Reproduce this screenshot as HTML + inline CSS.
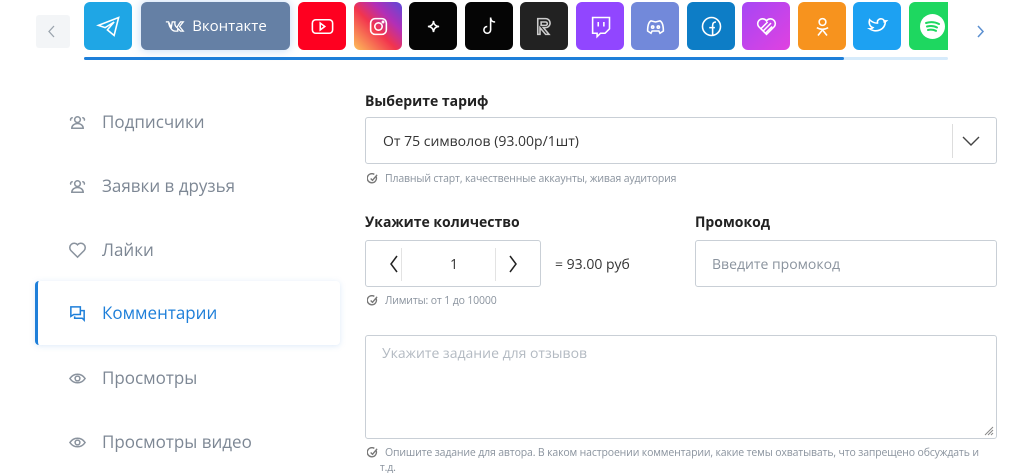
<!DOCTYPE html>
<html><head><meta charset="utf-8"><style>
*{box-sizing:border-box;margin:0;padding:0}
body{width:1024px;height:470px;overflow:hidden;background:#fff;font-family:"Open Sans","Liberation Sans","DejaVu Sans",sans-serif;position:relative;color:#333}
.a{position:absolute}
.tile{position:absolute;top:2px;width:48px;height:48px;border-radius:6px;display:flex;align-items:center;justify-content:center}
.tile svg{width:27px;height:27px;fill:none;stroke:#fff;stroke-width:1.4}
.nav{position:absolute;left:68px;font-size:17px;color:#7d8794;display:flex;align-items:center}
.nav svg{position:absolute;left:0;width:19px;height:19px;fill:none;stroke:#8a939e;stroke-width:1.6}
.nav span{position:absolute;left:34px;white-space:nowrap}
.lbl{position:absolute;font-size:14px;font-weight:bold;color:#222}
.box{position:absolute;border:1px solid #c9cfd6;border-radius:3px}
.hint{position:absolute;font-size:10.5px;color:#8a939e;white-space:nowrap;letter-spacing:-0.15px}
.hint svg{width:11px;height:11px;vertical-align:-2px;margin-right:7px;fill:none;stroke:#777;stroke-width:1.5}
</style></head><body>
<div class="a" style="left:36px;top:15px;width:34px;height:33px;background:#f3f5f7;border-radius:3px"></div>
<svg class="a" style="left:47px;top:24px" width="10" height="15"><path d="M7 2L2 7.5L7 13" stroke="#9aa3ad" stroke-width="1.3" fill="none"/></svg>
<svg class="a" style="left:975px;top:24px" width="10" height="15"><path d="M3 2L8 7.5L3 13" stroke="#5b8fd0" stroke-width="1.5" fill="none"/></svg>

<div class="tile" style="left:84px;background:#1fa6e5"><svg viewBox="0 0 24 24"><path d="M3 11L21 4L17 20L11 15L17 8L9 13Z"/></svg></div>
<div class="tile" style="left:141px;width:149px;background:#6580a5;box-shadow:0 0 10px rgba(80,150,230,.35);color:#fff;font-size:15px;gap:6px"><svg viewBox="0 0 24 24" style="width:22px"><path d="M2 7h3l3 6l1-6h3c-1 4 2 6 2 6l4-6h3l-4 5l4 5h-3l-3-3v3h-3c-3 0-6-4-7-9"/></svg>Вконтакте</div>
<div class="tile" style="left:298px;background:#fe0020"><svg viewBox="0 0 24 24"><rect x="3" y="6" width="18" height="12" rx="3"/><path d="M10 9l4 3l-4 3z"/></svg></div>
<div class="tile" style="left:354px;background:linear-gradient(45deg,#fdc05a,#f2344e 45%,#b22fb7 70%,#5b4ad8)"><svg viewBox="0 0 24 24"><rect x="5" y="5" width="14" height="14" rx="4"/><circle cx="12" cy="12" r="3.3"/><circle cx="16" cy="8" r=".6"/></svg></div>
<div class="tile" style="left:409px;background:#050505"><svg viewBox="0 0 24 24"><path d="M12 7C12 10 14 12 17 12C14 12 12 14 12 17C12 14 10 12 7 12C10 12 12 10 12 7Z"/></svg></div>
<div class="tile" style="left:465px;background:#050505"><svg viewBox="0 0 24 24"><path d="M13 4v11a3 3 0 1 1-3-3M13 4c0 3 2 4 4 4"/></svg></div>
<div class="tile" style="left:520px;background:#222"><svg viewBox="0 0 24 24" style="stroke:#ccc"><path d="M6 19V5h7a4 4 0 0 1 0 8h-2l5 6h-3l-5-6v6zM9 8h4a1.5 1.5 0 0 1 0 3H9z"/></svg></div>
<div class="tile" style="left:576px;background:#9146ff"><svg viewBox="0 0 24 24"><path d="M5 4h15v10l-4 4h-4l-3 3v-3H5z M10 8v4M15 8v4"/></svg></div>
<div class="tile" style="left:631px;background:#7289da"><svg viewBox="0 0 24 24"><path d="M5 16c0-5 1-8 3-9l4 1l4-1c2 1 3 4 3 9l-3 2l-1-2h-6l-1 2z"/><circle cx="9.5" cy="12.5" r="1"/><circle cx="14.5" cy="12.5" r="1"/></svg></div>
<div class="tile" style="left:687px;background:#0d7dc6"><svg viewBox="0 0 24 24"><circle cx="12" cy="12" r="8"/><path d="M13 20v-9c0-2 1-3 3-3M10 13h5"/></svg></div>
<div class="tile" style="left:742px;background:linear-gradient(135deg,#a646f5,#e042e0)"><svg viewBox="0 0 24 24"><path d="M12 19L5 12a4 4 0 0 1 7-5a4 4 0 0 1 7 5z M7 14l6-6M9 16l7-7M11 18l6-6"/></svg></div>
<div class="tile" style="left:798px;background:#f7931e"><svg viewBox="0 0 24 24"><circle cx="12" cy="8" r="3"/><path d="M7 13c3 2 7 2 10 0M12 15l-4 5M12 15l4 5"/></svg></div>
<div class="tile" style="left:853px;background:#1da1f2"><svg viewBox="0 0 24 24"><path d="M20 7c-1 1-2 1-2 1c0-3-4-4-6-1v2c-3 0-5-1-7-3c-1 3 0 6 3 7c-1 1-2 1-3 1c6 4 14 1 14-7z"/></svg></div>
<div class="a" style="left:909px;top:2px;width:39px;height:48px;background:#1ed760;border-radius:6px 0 0 6px;overflow:hidden"><div class="a" style="left:11px;top:12px;width:25px;height:25px;border-radius:50%;background:#fff"></div>
<svg class="a" style="left:11px;top:12px" width="25" height="25"><path d="M6 9c5-1.5 9-1 13 1M7 12.5c4-1 7-.7 10 1M8 16c3-.7 5-.5 8 .8" stroke="#1ed760" stroke-width="2" fill="none" stroke-linecap="round"/></svg></div>
<div class="a" style="left:84px;top:57px;width:864px;height:3px;background:#d6ebfb;border-radius:2px"></div>
<div class="a" style="left:84px;top:57px;width:760px;height:3px;background:#1e7fd9;border-radius:2px"></div>

<div class="a" style="left:35px;top:281px;width:305px;height:64px;border-radius:4px;box-shadow:0 1px 6px rgba(120,170,230,.25);border-left:3px solid #1e7fd9;background:#fff"></div>
<div class="nav" style="top:122px"><svg viewBox="0 0 20 20"><circle cx="10" cy="7" r="3"/><path d="M4 16c0-3 3-5 6-5s6 2 6 5zM3 8a2 2 0 0 1 2-3M17 8a2 2 0 0 0-2-3"/></svg><span style="top:-12px">Подписчики</span></div>
<div class="nav" style="top:186px"><svg viewBox="0 0 20 20"><circle cx="10" cy="7" r="3"/><path d="M4 16c0-3 3-5 6-5s6 2 6 5zM3 8a2 2 0 0 1 2-3M17 8a2 2 0 0 0-2-3"/></svg><span style="top:-12px">Заявки в друзья</span></div>
<div class="nav" style="top:250px"><svg viewBox="0 0 20 20"><path d="M10 17L3 10a4 4 0 0 1 7-6a4 4 0 0 1 7 6z"/></svg><span style="top:-12px">Лайки</span></div>
<div class="nav" style="top:313px;color:#1e7fd9"><svg viewBox="0 0 20 20" style="stroke:#1e7fd9"><path d="M3 3h10v8H6l-3 2zM7 13v2h8l2 2V7h-4"/></svg><span style="top:-12px">Комментарии</span></div>
<div class="nav" style="top:378px"><svg viewBox="0 0 20 20"><path d="M2 10c4-6 12-6 16 0c-4 6-12 6-16 0z"/><circle cx="10" cy="10" r="2.5"/></svg><span style="top:-12px">Просмотры</span></div>
<div class="nav" style="top:442px"><svg viewBox="0 0 20 20"><path d="M2 10c4-6 12-6 16 0c-4 6-12 6-16 0z"/><circle cx="10" cy="10" r="2.5"/></svg><span style="top:-12px">Просмотры видео</span></div>

<div class="lbl" style="left:365px;top:92px">Выберите тариф</div>
<div class="box" style="left:365px;top:117px;width:632px;height:47px"><div class="a" style="left:17px;top:14px;font-size:14px;color:#333">От 75 символов (93.00р/1шт)</div><div class="a" style="left:586px;top:6px;width:1px;height:34px;background:#ddd"></div>
<svg class="a" style="left:595px;top:17px" width="20" height="12"><path d="M2 2l8 8l8-8" stroke="#444" stroke-width="1.4" fill="none"/></svg></div>
<div class="hint" style="left:367px;top:172px"><svg viewBox="0 0 12 12"><path d="M10 4a5 5 0 1 1-2-2.5M4 6l2 2l5-6"/></svg>Плавный старт, качественные аккаунты, живая аудитория</div>

<div class="lbl" style="left:365px;top:213px">Укажите количество</div>
<div class="lbl" style="left:695px;top:213px">Промокод</div>
<div class="box" style="left:365px;top:240px;width:176px;height:47px">
<svg class="a" style="left:22px;top:13px" width="12" height="20"><path d="M9 2L3 10l6 8" stroke="#222" stroke-width="1.5" fill="none"/></svg>
<div class="a" style="left:35px;top:7px;width:1px;height:33px;background:#e3e3e3"></div>
<div class="a" style="left:84px;top:14px;font-size:14px">1</div>
<div class="a" style="left:129px;top:7px;width:1px;height:33px;background:#e3e3e3"></div>
<svg class="a" style="left:141px;top:13px" width="12" height="20"><path d="M3 2l6 8l-6 8" stroke="#222" stroke-width="1.5" fill="none"/></svg></div>
<div class="a" style="left:555px;top:255px;font-size:14px;color:#333">= 93.00 руб</div>
<div class="box" style="left:695px;top:240px;width:302px;height:47px"><div class="a" style="left:16px;top:14px;font-size:14px;color:#8a939e">Введите промокод</div></div>
<div class="hint" style="left:367px;top:294px"><svg viewBox="0 0 12 12"><path d="M10 4a5 5 0 1 1-2-2.5M4 6l2 2l5-6"/></svg>Лимиты: от 1 до 10000</div>

<div class="box" style="left:365px;top:335px;width:632px;height:104px"><div class="a" style="left:16px;top:8px;font-size:14px;color:#b3bac2">Укажите задание для отзывов</div>
<svg class="a" style="right:2px;bottom:2px" width="10" height="10"><path d="M9 1L1 9M9 4L4 9M9 7L7 9" stroke="#888" stroke-width="1"/></svg></div>
<div class="hint" style="left:367px;top:446px;line-height:15px"><svg viewBox="0 0 12 12"><path d="M10 4a5 5 0 1 1-2-2.5M4 6l2 2l5-6"/></svg>Опишите задание для автора. В каком настроении комментарии, какие темы охватывать, что запрещено обсуждать и<br>&nbsp;&nbsp;&nbsp;&nbsp;&nbsp;т.д.</div>
</body></html>
